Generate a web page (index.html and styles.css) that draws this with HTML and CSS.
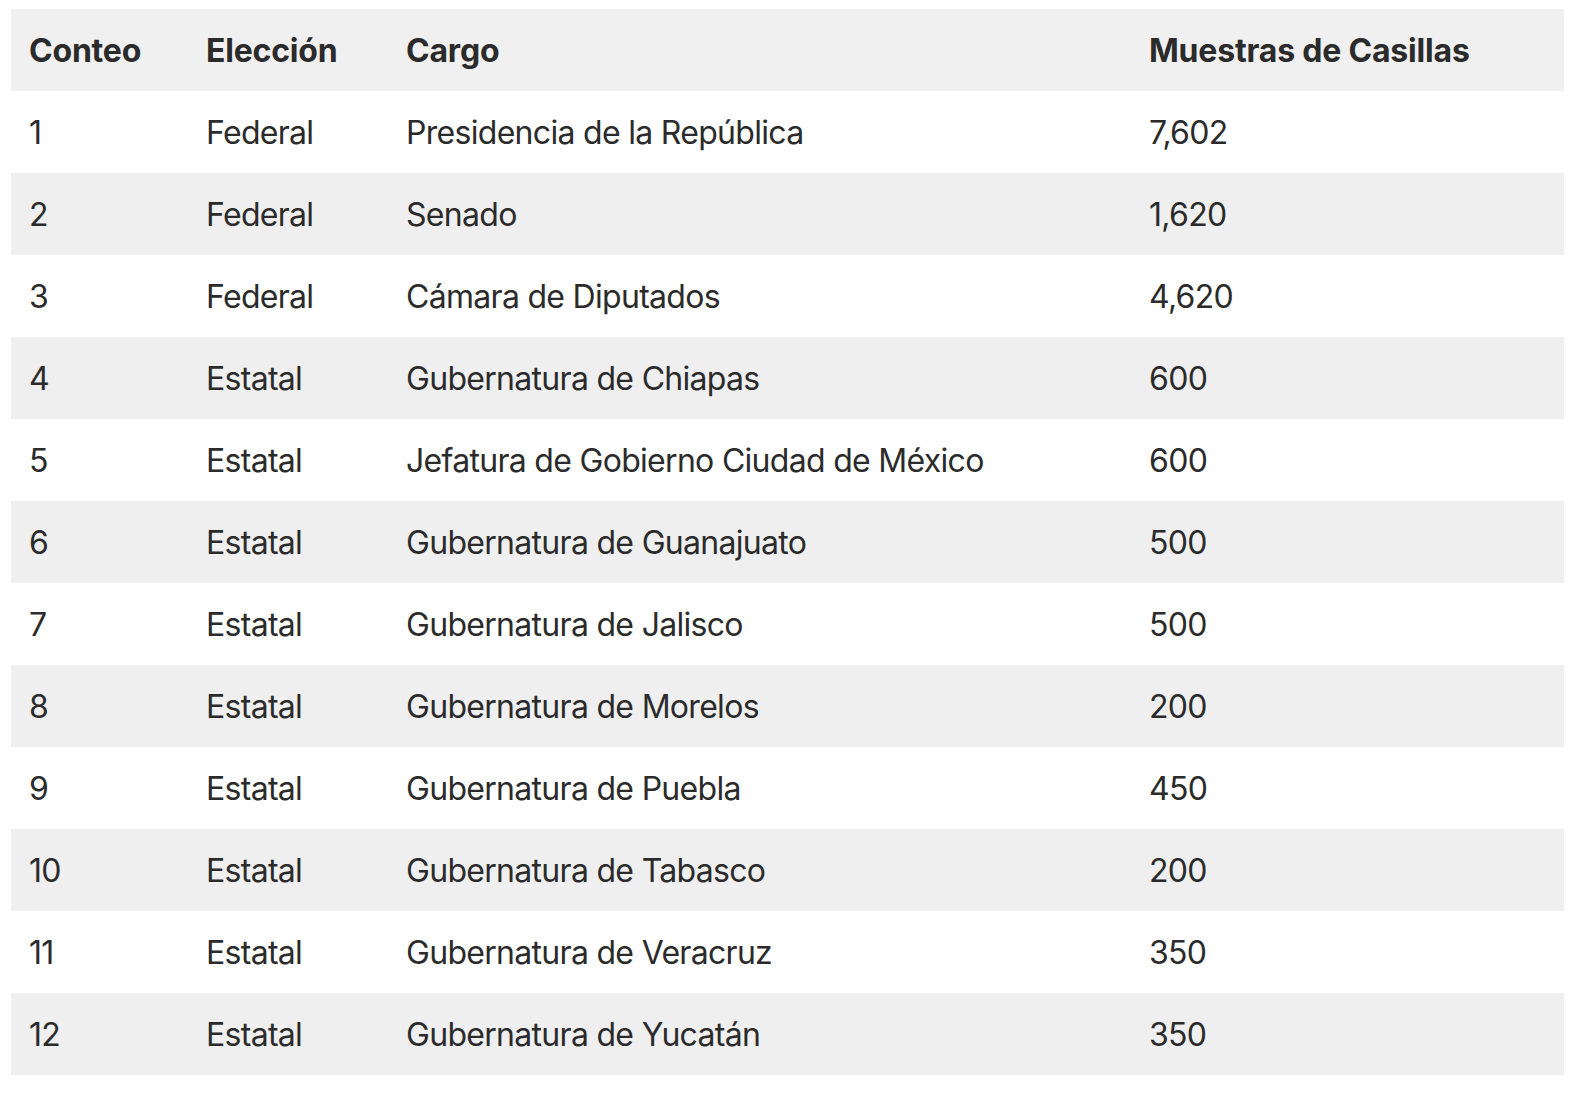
FILE: index.html
```html
<!DOCTYPE html>
<html lang="es">
<head>
<meta charset="utf-8">
<title>Conteo rápido</title>
<link rel="stylesheet" href="styles.css">
</head>
<body>
<div class="wrap">
<table class="tbl">
<colgroup>
<col class="c1"><col class="c2"><col class="c3"><col class="c4">
</colgroup>
<thead>
<tr><th>Conteo</th><th>Elección</th><th>Cargo</th><th>Muestras de Casillas</th></tr>
</thead>
<tbody>
<tr><td>1</td><td>Federal</td><td>Presidencia de la República</td><td>7,602</td></tr>
<tr><td>2</td><td>Federal</td><td>Senado</td><td>1,620</td></tr>
<tr><td>3</td><td>Federal</td><td>Cámara de Diputados</td><td>4,620</td></tr>
<tr><td>4</td><td>Estatal</td><td>Gubernatura de Chiapas</td><td>600</td></tr>
<tr><td>5</td><td>Estatal</td><td>Jefatura de Gobierno Ciudad de México</td><td>600</td></tr>
<tr><td>6</td><td>Estatal</td><td>Gubernatura de Guanajuato</td><td>500</td></tr>
<tr><td>7</td><td>Estatal</td><td>Gubernatura de Jalisco</td><td>500</td></tr>
<tr><td>8</td><td>Estatal</td><td>Gubernatura de Morelos</td><td>200</td></tr>
<tr><td>9</td><td>Estatal</td><td>Gubernatura de Puebla</td><td>450</td></tr>
<tr><td>10</td><td>Estatal</td><td>Gubernatura de Tabasco</td><td>200</td></tr>
<tr><td>11</td><td>Estatal</td><td>Gubernatura de Veracruz</td><td>350</td></tr>
<tr><td>12</td><td>Estatal</td><td>Gubernatura de Yucatán</td><td>350</td></tr>
</tbody>
</table>
</div>
</body>
</html>
```

FILE: styles.css
```css
html, body {
  margin: 0;
  padding: 0;
  background: #ffffff;
}
.wrap {
  padding: 9px 28px 0 11px;
}
.tbl {
  width: 1553px;
  border-collapse: collapse;
  table-layout: fixed;
  font-family: Inter, "Noto Sans", "Liberation Sans", sans-serif;
  font-size: 32px;
  color: #2b2b2b;
}
.c1 { width: 177px; }
.c2 { width: 200px; }
.c3 { width: 743px; }
.c4 { width: 433px; }
.tbl th, .tbl td {
  text-align: left;
  padding: 16px 18px 14px;
  line-height: 52px;
  height: 52px;
  white-space: nowrap;
}
.tbl th {
  font-weight: 700;
  letter-spacing: -0.2px;
  background: #f0f0f0;
}
.tbl td {
  font-weight: 400;
  letter-spacing: -0.7px;
}
.tbl tbody tr:nth-child(even) td {
  background: #efefef;
}
```
